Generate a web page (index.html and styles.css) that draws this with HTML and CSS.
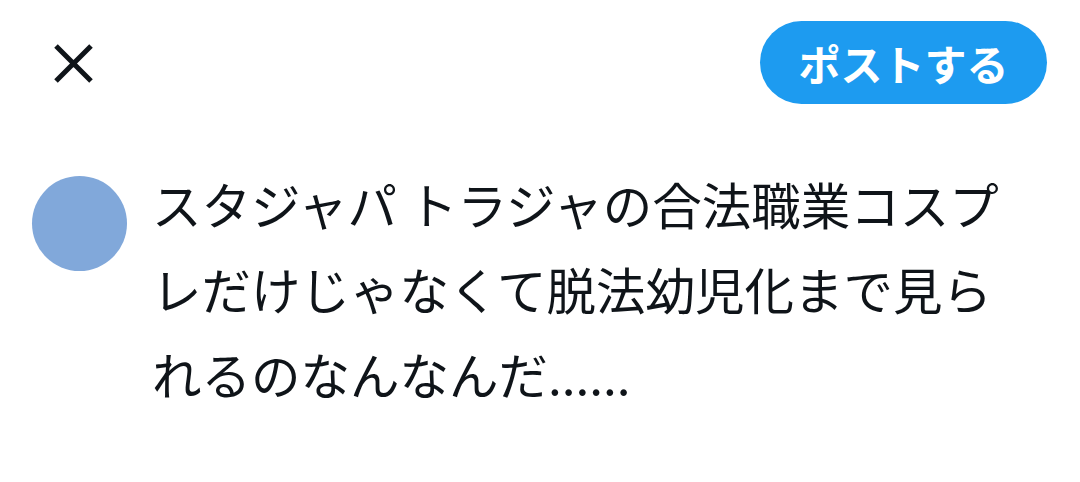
FILE: index.html
```html
<!DOCTYPE html>
<html lang="ja">
<head>
<meta charset="utf-8">
<link rel="stylesheet" href="styles.css">
</head>
<body>
<div class="page">
  <header class="top">
    <button class="close" aria-label="閉じる">
      <svg width="39" height="39" viewBox="0 0 39 39"><path d="M2 2L37 37M37 2L2 37" stroke="#0f1419" stroke-width="5" fill="none"/></svg>
    </button>
    <button class="post">ポストする</button>
  </header>
  <section class="tweet">
    <div class="avatar"></div>
    <p class="text">スタジャパ トラジャの合法職業コスプレだけじゃなくて脱法幼児化まで見られるのなんなんだ......</p>
  </section>
</div>
</body>
</html>
```
FILE: styles.css
```css
html, body { margin: 0; padding: 0; background: #fff; }
body { font-family: "Noto Sans CJK JP", "Noto Sans", sans-serif; color: #0f1419; }
.page { width: 1080px; height: 482px; overflow: hidden; }
.top {
  display: flex; justify-content: space-between; align-items: center;
  padding: 21px 33px 0 54px; height: 83px;
}
.close { border: 0; background: none; padding: 0; width: 39px; height: 39px; display: flex; margin-top: 1px; }
.post {
  border: 0; background: #1d9bf0; color: #fff;
  font-family: "Noto Sans CJK JP", sans-serif; font-weight: 700; font-size: 42px;
  width: 287px; height: 83px; border-radius: 42px; padding: 0;
  line-height: 83px;
}
.tweet { display: flex; gap: 25px; padding: 57px 40px 0 32px; }
.avatar { flex: 0 0 95px; width: 95px; height: 95px; border-radius: 50%; background: #81a8da; margin-top: 15px; }
.text { margin: 0; font-size: 49.5px; line-height: 85px; width: 890px; }
```
